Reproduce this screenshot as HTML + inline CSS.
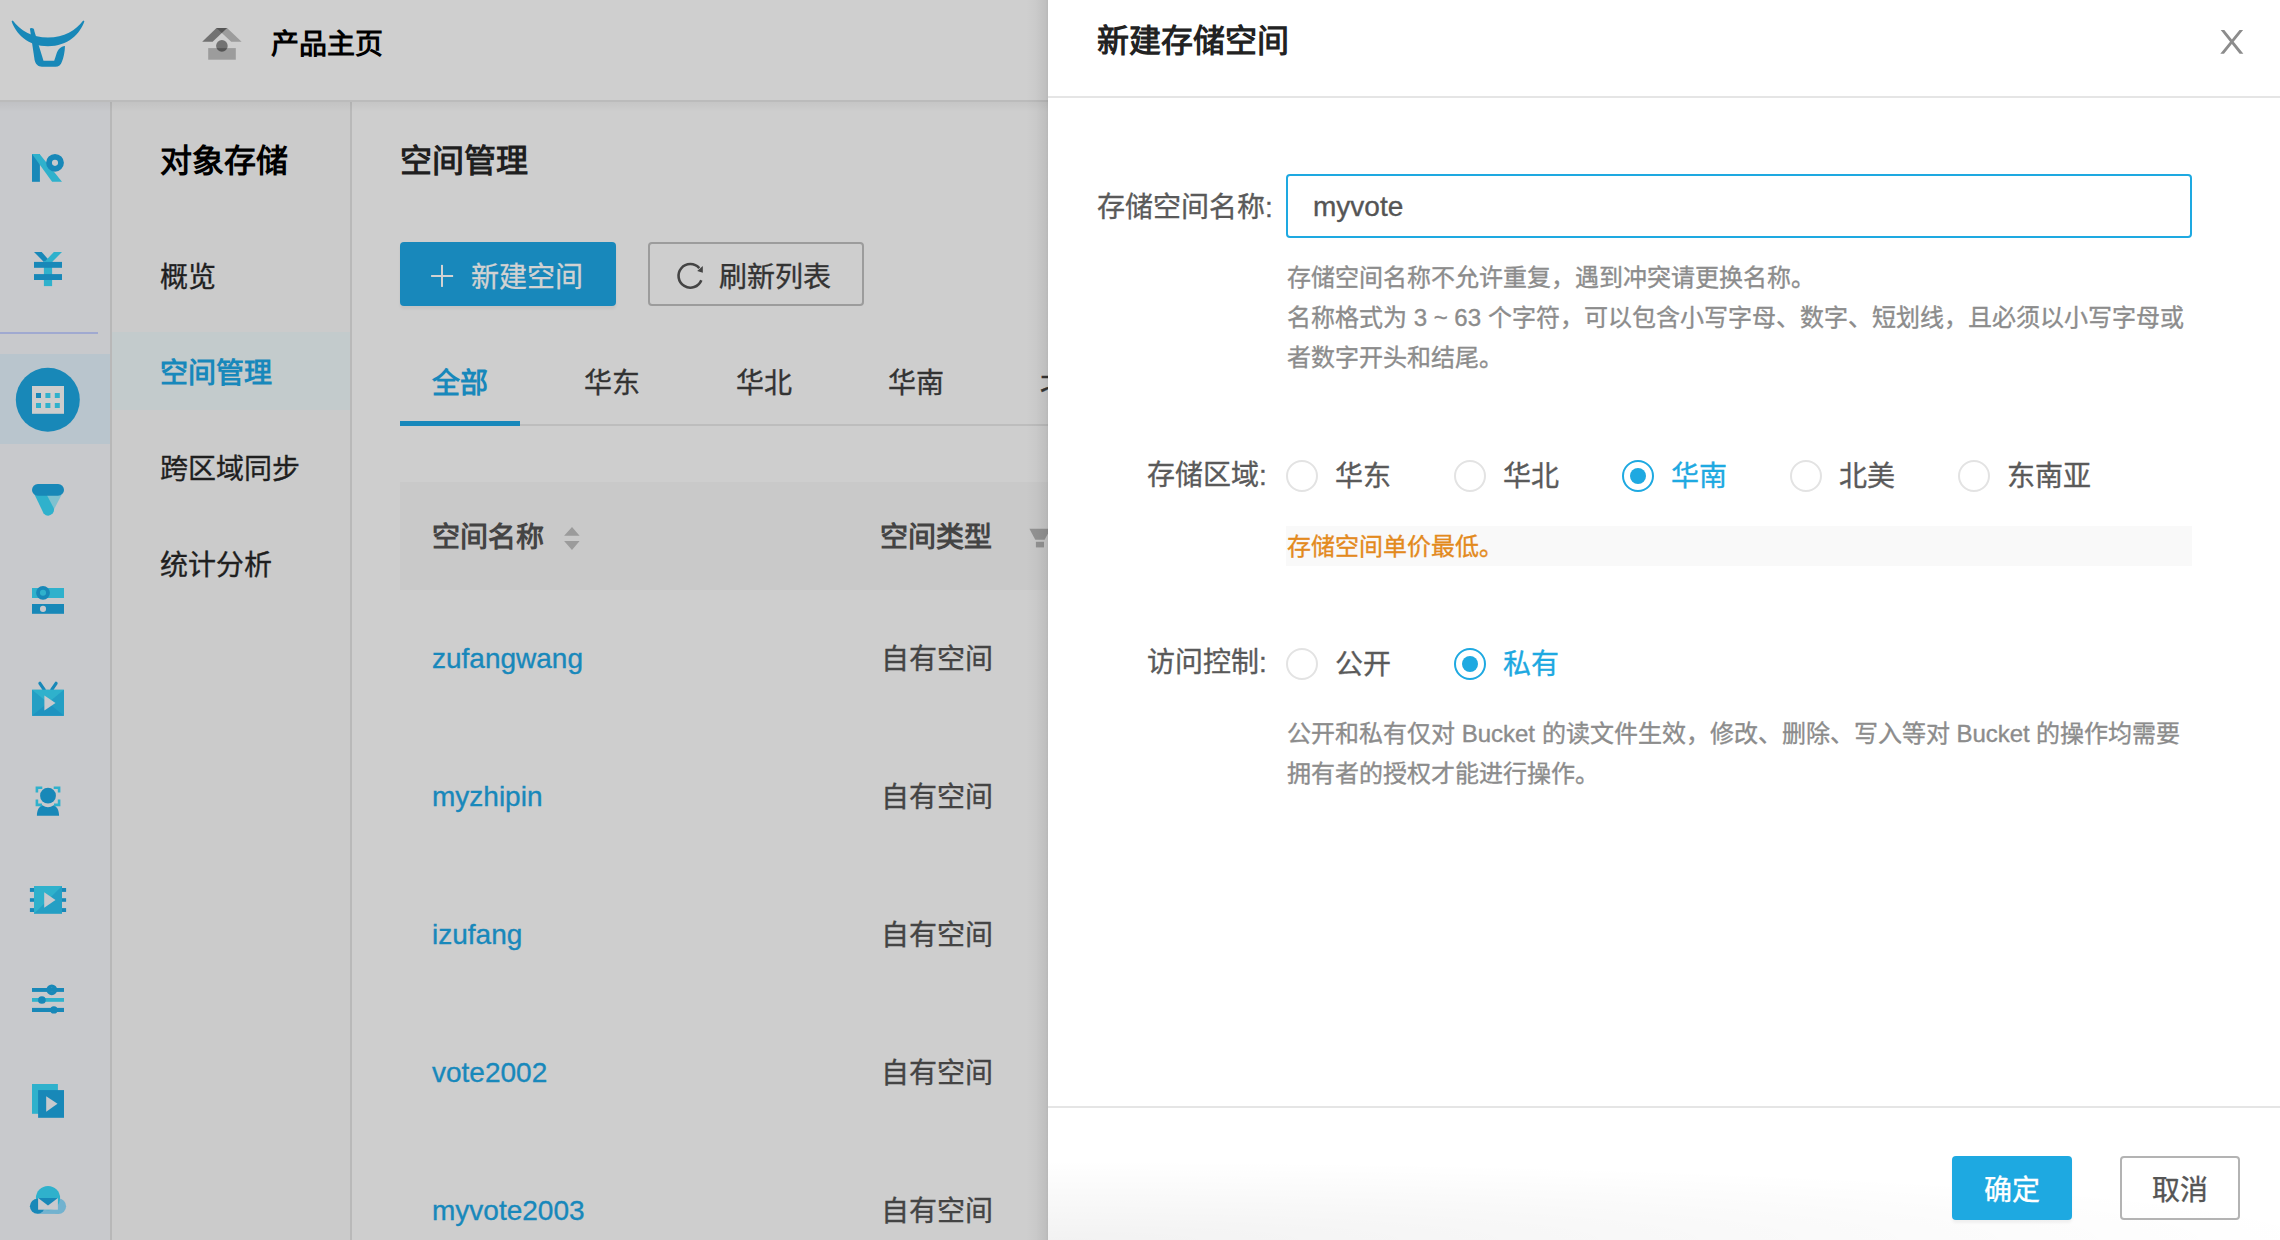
<!DOCTYPE html>
<html lang="zh-CN"><head><meta charset="utf-8">
<style>
*{box-sizing:border-box;margin:0;padding:0}
html,body{width:2280px;height:1240px;overflow:hidden;background:#cccccc;font-family:"Liberation Sans",sans-serif;}
.a{position:absolute;white-space:nowrap}
.t{line-height:1}
body{-webkit-text-stroke:0.35px currentColor}
.b{-webkit-text-stroke:0}
</style></head><body>
<div class="a" style="left:0px;top:0px;width:1048px;height:102px;background:#cfcfcf;border-bottom:2px solid #bbbbbb"></div>
<div class="a" style="left:0px;top:102px;width:112px;height:1138px;background:#c8c9cc;border-right:2px solid #b8b8b8"></div>
<div class="a" style="left:112px;top:102px;width:240px;height:1138px;background:#cbcbcb;border-right:2px solid #b9b9b9"></div>
<div class="a" style="left:352px;top:102px;width:696px;height:1138px;background:#cecece"></div>
<div class="a" style="left:0px;top:102px;width:1048px;height:10px;background:linear-gradient(to bottom,rgba(0,0,0,0.045),rgba(0,0,0,0))"></div>
<div class="a" style="left:0px;top:354px;width:110px;height:90px;background:#b9c5cd"></div>
<div class="a t b" style="left:271px;top:31px;font-size:28px;color:#000;font-weight:bold;">产品主页</div>
<div class="a t b" style="left:160px;top:145px;font-size:32px;color:#000;font-weight:bold;">对象存储</div>
<div class="a t" style="left:160px;top:264px;font-size:28px;color:#1f1f1f;">概览</div>
<div class="a" style="left:112px;top:332px;width:238px;height:78px;background:#c3cbcc"></div>
<div class="a t b" style="left:160px;top:360px;font-size:28px;color:#1888bb;font-weight:bold;">空间管理</div>
<div class="a t" style="left:160px;top:456px;font-size:28px;color:#1f1f1f;">跨区域同步</div>
<div class="a t" style="left:160px;top:552px;font-size:28px;color:#1f1f1f;">统计分析</div>
<div class="a t b" style="left:400px;top:145px;font-size:32px;color:#1f1f1f;font-weight:bold;">空间管理</div>
<div class="a" style="left:400px;top:242px;width:216px;height:64px;background:#1888bb;border-radius:4px;box-shadow:0 3px 3px rgba(0,0,0,0.05)"></div>
<div class="a t" style="left:471px;top:264px;font-size:28px;color:#d2d2d2;">新建空间</div>
<div class="a" style="left:648px;top:242px;width:216px;height:64px;border:2px solid #9c9c9c;border-radius:4px"></div>
<div class="a t" style="left:719px;top:264px;font-size:28px;color:#333;">刷新列表</div>
<div class="a t b" style="left:432px;top:370px;font-size:28px;color:#1888bb;font-weight:bold;">全部</div>
<div class="a t" style="left:584px;top:370px;font-size:28px;color:#333;">华东</div>
<div class="a t" style="left:736px;top:370px;font-size:28px;color:#333;">华北</div>
<div class="a t" style="left:888px;top:370px;font-size:28px;color:#333;">华南</div>
<div class="a t" style="left:1040px;top:370px;font-size:28px;color:#333;">北美</div>
<div class="a" style="left:400px;top:424px;width:648px;height:2px;background:#bdbdbd"></div>
<div class="a" style="left:400px;top:421px;width:120px;height:5px;background:#1888bb"></div>
<div class="a" style="left:400px;top:482px;width:648px;height:108px;background:#c9c9c9"></div>
<div class="a t b" style="left:432px;top:524px;font-size:28px;color:#444;font-weight:bold;">空间名称</div>
<div class="a t b" style="left:880px;top:524px;font-size:28px;color:#444;font-weight:bold;">空间类型</div>
<div class="a t" style="left:432px;top:645px;font-size:28px;color:#1888bb;">zufangwang</div>
<div class="a t" style="left:881px;top:646px;font-size:28px;color:#444;">自有空间</div>
<div class="a t" style="left:432px;top:783px;font-size:28px;color:#1888bb;">myzhipin</div>
<div class="a t" style="left:881px;top:784px;font-size:28px;color:#444;">自有空间</div>
<div class="a t" style="left:432px;top:921px;font-size:28px;color:#1888bb;">izufang</div>
<div class="a t" style="left:881px;top:922px;font-size:28px;color:#444;">自有空间</div>
<div class="a t" style="left:432px;top:1059px;font-size:28px;color:#1888bb;">vote2002</div>
<div class="a t" style="left:881px;top:1060px;font-size:28px;color:#444;">自有空间</div>
<div class="a t" style="left:432px;top:1197px;font-size:28px;color:#1888bb;">myvote2003</div>
<div class="a t" style="left:881px;top:1198px;font-size:28px;color:#444;">自有空间</div>
<svg class="a" style="left:0;top:0" width="1048" height="1240" viewBox="0 0 1048 1240">
<!-- logo -->
<path fill="#1888b8" d="M11.6 21.2 C16 34 28 46 48 46.2 C68 46 80 34 84.4 21.2 L83.2 20.4 C76 30 64 37.6 48 37.6 C32 37.6 20 30 12.8 20.4 Z"/>
<path fill="#1888b8" d="M29.9 28.4 Q31.5 27.3 33.4 28.6 Q34.2 29.5 34.4 31.2 L43.5 60.8 L54.2 60.8 C56 56 57 51 59 49 C61 47 63 46.3 65 46 C64.8 52 63.5 58 62 61.5 C61 65 58.5 66.7 55.5 66.7 L42 66.7 C38 66.7 35.5 64 34.6 60 Z"/>
<!-- home icon -->
<g fill="#000">
<path fill-opacity="0.45" d="M216.5 28.1 L227.1 28.1 L212.6 41.7 L202.2 41.7 Z"/>
<path fill-opacity="0.246" d="M216.5 28.1 L227.1 28.1 L241.6 41.7 L231.2 41.7 Z"/>
<circle fill-opacity="0.45" cx="221.9" cy="45.9" r="5.8"/>
<rect fill-opacity="0.246" x="208.2" y="48.1" width="27.6" height="11.6"/>
</g>
<!-- N icon -->
<rect fill="#1888b8" x="32" y="154" width="7.9" height="27.8"/>
<path fill="#2fb1cc" d="M32 154 L39.6 154 L62 181.8 L52.1 181.8 Z"/>
<path fill="#1888b8" fill-rule="evenodd" d="M55 153.9 A8.9 8.9 0 1 1 55 171.7 A8.9 8.9 0 1 1 55 153.9 Z M55 159.8 A3.05 3.05 0 1 0 55 165.9 A3.05 3.05 0 1 0 55 159.8 Z"/>
<!-- yen -->
<path fill="#1888b8" d="M34 252 L41.7 252 L50.5 261.9 L43.9 261.9 Z"/>
<path fill="#2fb1cc" d="M53.9 252 L62 252 L52.1 261.9 L44.4 261.9 Z"/>
<rect fill="#2fb1cc" x="43.9" y="261" width="8.2" height="25.1"/>
<rect fill="#1888b8" x="34" y="261.9" width="28" height="5.9"/>
<rect fill="#1888b8" x="34" y="274.1" width="28" height="5.9"/>
<!-- divider -->
<rect fill="#a0a9d0" x="0" y="332" width="98" height="2"/>
<!-- triangle icon -->
<path fill="#7fc1cf" d="M46.2 495 L61.5 495 L53.4 510.5 Z"/>
<path fill="#2fb1cc" d="M33.8 493 L45.8 493 L53.8 508.3 Q54.6 511 52.6 513.6 Q48 518 43.6 513.4 Z"/>
<rect fill="#1888b8" x="32" y="484" width="32" height="11.8" rx="5.9"/>
<!-- storage icon -->
<rect fill="#2fb1cc" x="32" y="588" width="32" height="10"/>
<rect fill="#1888b8" x="32" y="604" width="32" height="9.8"/>
<path fill="#1888b8" fill-rule="evenodd" d="M43 585.9 A6.9 6.9 0 1 1 43 599.7 A6.9 6.9 0 1 1 43 585.9 Z M43 589.75 A3.05 3.05 0 1 0 43 595.85 A3.05 3.05 0 1 0 43 589.75 Z"/>
<circle fill="#c8c9cd" cx="43" cy="608.9" r="3.05"/>
<!-- tv -->
<path stroke="#1888b8" stroke-width="3.2" stroke-linecap="round" d="M39.9 683.3 L44.2 689.6 M56.1 683.3 L51.8 689.6"/>
<rect fill="#249fc4" x="32" y="689.8" width="32" height="26"/>
<path fill="#2fb1cc" d="M32 689.8 L64 689.8 L48 702.8 Z"/>
<path fill="#1f93c0" d="M32 715.8 L64 715.8 L48 702.8 Z"/>
<path fill="#c8c9cd" d="M44.4 695.5 L44.4 710.6 L55.5 702.9 Z"/>
<!-- face -->
<circle fill="#1888b8" cx="48" cy="795.7" r="7.9"/>
<path fill="#1888b8" d="M36.9 815.8 C37 810 39 806.5 42.3 805.2 Q48 809.5 53.7 805.2 C57 806.5 59 810 59.1 815.8 Z"/>
<path fill="none" stroke="#2fb1cc" stroke-width="2.6" d="M42.3 787.7 L36.9 787.7 L36.9 792.5 M53.7 787.7 L59.1 787.7 L59.1 792.5 M36.9 799.5 L36.9 804.9 L42 804.9 M59.1 799.5 L59.1 804.9 L54 804.9"/>
<!-- film -->
<rect fill="#1888b8" x="29.9" y="888" width="36.2" height="3.9"/>
<rect fill="#1888b8" x="29.9" y="898.2" width="36.2" height="3.6"/>
<rect fill="#1888b8" x="29.9" y="908.1" width="36.2" height="3.9"/>
<rect fill="#249fc4" x="34" y="886" width="28" height="27.8"/>
<path fill="#2fb1cc" d="M34 886 L62 886 L34 913.8 Z"/>
<path fill="#c8c9cd" d="M44.2 892.3 L44.2 907.7 L55.5 900 Z"/>
<!-- sliders -->
<rect fill="#1888b8" x="32" y="988" width="32" height="3.9"/>
<rect fill="#2fb1cc" x="32" y="998" width="32" height="3.8"/>
<rect fill="#1888b8" x="32" y="1007.9" width="32" height="4.1"/>
<path fill="#1888b8" fill-rule="evenodd" d="M51.8 984.4 A5.4 5.4 0 1 1 51.8 995.2 A5.4 5.4 0 1 1 51.8 984.4 Z M51.8 987.8 A2 2 0 1 0 51.8 991.8 A2 2 0 1 0 51.8 987.8 Z"/>
<circle fill="#1888b8" cx="41.9" cy="1000" r="3.85"/>
<circle fill="#1888b8" cx="53.9" cy="1009.9" r="3.7"/>
<!-- stack play -->
<rect fill="#2fb1cc" x="32" y="1084" width="25.9" height="29.8"/>
<rect fill="#1888b8" x="38.1" y="1090.1" width="25.9" height="27.7"/>
<path fill="#c8c9cd" d="M46.2 1096.2 L46.2 1111.7 L57.5 1103.8 Z"/>
<!-- cloud mail -->
<circle fill="#72b2cf" cx="58.4" cy="1206.2" r="7.7"/>
<rect fill="#72b2cf" x="37.4" y="1198.5" width="21" height="15.4"/>
<circle fill="#2fb1cc" cx="48" cy="1198.1" r="12.1"/>
<circle fill="#1888b8" cx="37.4" cy="1206.3" r="7.5"/>
<rect fill="#c8c9cd" x="38.1" y="1198" width="19.8" height="11.7"/>
<path fill="#1888b8" d="M38.1 1198 L57.9 1198 L48 1205.6 Z"/>
<circle fill="#1888b8" cx="47.8" cy="399.8" r="32"/>
<rect fill="#cdcdcd" x="32" y="386" width="32" height="27.8"/>
<rect fill="#1888b8" x="36" y="393" width="5" height="5"/>
<rect fill="#2fb1cc" x="45.4" y="393" width="5" height="5"/>
<rect fill="#2fb1cc" x="54.8" y="393" width="5" height="5"/>
<rect fill="#2fb1cc" x="36" y="403" width="5" height="5"/>
<rect fill="#2fb1cc" x="45.4" y="403" width="5" height="5"/>
<rect fill="#2fb1cc" x="54.8" y="403" width="5" height="5"/>
<!-- plus -->
<rect fill="#d2d2d2" x="441" y="264.9" width="2" height="22"/>
<rect fill="#d2d2d2" x="431.1" y="275" width="22" height="2"/>
<!-- refresh -->
<path fill="none" stroke="#444" stroke-width="2.6" d="M701.3 280.2 A11.8 11.8 0 1 1 699.3 268.2"/>
<path fill="#444" d="M702.8 266 L702.8 272.7 L697.2 271.1 Z"/>
<!-- sort -->
<path fill="#9b9b9b" d="M572 526.9 L579.6 535.8 L564.1 535.8 Z M564.1 541 L579.6 541 L572 550.1 Z"/>
<!-- filter -->
<path fill="#939393" d="M1029.4 528.8 L1050.6 528.8 L1044.6 539.8 L1035.3 539.8 Z"/>
<rect fill="#939393" x="1035.9" y="541.8" width="8.1" height="5.6"/>
<!-- active circle -->
</svg>
<div class="a" style="left:1026px;top:0px;width:22px;height:1240px;background:linear-gradient(to right,rgba(0,0,0,0) 0%,rgba(0,0,0,0.025) 45%,rgba(0,0,0,0.075) 90%,rgba(0,0,0,0.11) 100%)"></div>
<div class="a" style="left:1048px;top:0px;width:1232px;height:1240px;background:#fff"></div>
<div class="a t b" style="left:1097px;top:25px;font-size:32px;color:#222;font-weight:bold;">新建存储空间</div>
<svg class="a" style="left:2200px;top:10px" width="60" height="60" viewBox="2200 10 60 60"><path fill="#8c8c8c" d="M2220.7 30.1 L2224.3 30.1 L2243.4 53.8 L2239.6 53.8 Z M2239.5 30.1 L2243.1 30.1 L2224.0 53.8 L2220.3 53.8 Z"/></svg>
<div class="a" style="left:1048px;top:96px;width:1232px;height:2px;background:#e5e5e5"></div>
<div class="a t" style="left:1097px;top:194px;font-size:28px;color:#5a5a5a;">存储空间名称:</div>
<div class="a" style="left:1286px;top:174px;width:906px;height:64px;border:2px solid #1ea9e1;border-radius:4px"></div>
<div class="a t" style="left:1313px;top:193px;font-size:28px;color:#555;">myvote</div>
<div class="a" style="left:1287px;top:258px;font-size:24px;line-height:40px;color:#8c8c8c;white-space:nowrap">存储空间名称不允许重复，遇到冲突请更换名称。<br>名称格式为 3 ~ 63 个字符，可以包含小写字母、数字、短划线，且必须以小写字母或<br>者数字开头和结尾。</div>
<div class="a t" style="left:1147px;top:462px;font-size:28px;color:#5a5a5a;">存储区域:</div>
<div class="a" style="left:1286px;top:526px;width:906px;height:40px;background:#f9f9f9"></div>
<div class="a t" style="left:1287px;top:535px;font-size:24px;color:#e38a1d;">存储空间单价最低。</div>
<div class="a t" style="left:1147px;top:649px;font-size:28px;color:#5a5a5a;">访问控制:</div>
<div class="a" style="left:1287px;top:714px;font-size:24px;line-height:40px;color:#8c8c8c;white-space:nowrap">公开和私有仅对 Bucket 的读文件生效，修改、删除、写入等对 Bucket 的操作均需要<br>拥有者的授权才能进行操作。</div>
<div class="a" style="left:1286px;top:460px;width:32px;height:32px;border:2px solid #e3e3e3;border-radius:50%"></div>
<div class="a t" style="left:1335px;top:463px;font-size:28px;color:#5a5a5a;">华东</div>
<div class="a" style="left:1454px;top:460px;width:32px;height:32px;border:2px solid #e3e3e3;border-radius:50%"></div>
<div class="a t" style="left:1503px;top:463px;font-size:28px;color:#5a5a5a;">华北</div>
<div class="a" style="left:1622px;top:460px;width:32px;height:32px;border:2px solid #1ea9e1;border-radius:50%"></div>
<div class="a" style="left:1630px;top:468px;width:16px;height:16px;background:#1ea9e1;border-radius:50%"></div>
<div class="a t" style="left:1671px;top:463px;font-size:28px;color:#1ea9e1;">华南</div>
<div class="a" style="left:1790px;top:460px;width:32px;height:32px;border:2px solid #e3e3e3;border-radius:50%"></div>
<div class="a t" style="left:1839px;top:463px;font-size:28px;color:#5a5a5a;">北美</div>
<div class="a" style="left:1958px;top:460px;width:32px;height:32px;border:2px solid #e3e3e3;border-radius:50%"></div>
<div class="a t" style="left:2007px;top:463px;font-size:28px;color:#5a5a5a;">东南亚</div>
<div class="a" style="left:1286px;top:648px;width:32px;height:32px;border:2px solid #e3e3e3;border-radius:50%"></div>
<div class="a t" style="left:1335px;top:651px;font-size:28px;color:#5a5a5a;">公开</div>
<div class="a" style="left:1454px;top:648px;width:32px;height:32px;border:2px solid #1ea9e1;border-radius:50%"></div>
<div class="a" style="left:1462px;top:656px;width:16px;height:16px;background:#1ea9e1;border-radius:50%"></div>
<div class="a t" style="left:1503px;top:651px;font-size:28px;color:#1ea9e1;">私有</div>
<div class="a" style="left:1048px;top:1106px;width:1232px;height:2px;background:#e5e5e5"></div>
<div class="a" style="left:1048px;top:1140px;width:1232px;height:100px;background:radial-gradient(ellipse 1300px 80px at 0% 100%,rgba(0,0,0,0.05),rgba(0,0,0,0))"></div>
<div class="a" style="left:1952px;top:1156px;width:120px;height:64px;background:#1ea9e1;border-radius:4px;box-shadow:0 3px 3px rgba(0,0,0,0.05)"></div>
<div class="a t" style="left:1984px;top:1177px;font-size:28px;color:#fff;">确定</div>
<div class="a" style="left:2120px;top:1156px;width:120px;height:64px;border:2px solid #b3b3b3;border-radius:4px"></div>
<div class="a t" style="left:2152px;top:1177px;font-size:28px;color:#555;">取消</div>
</body></html>
